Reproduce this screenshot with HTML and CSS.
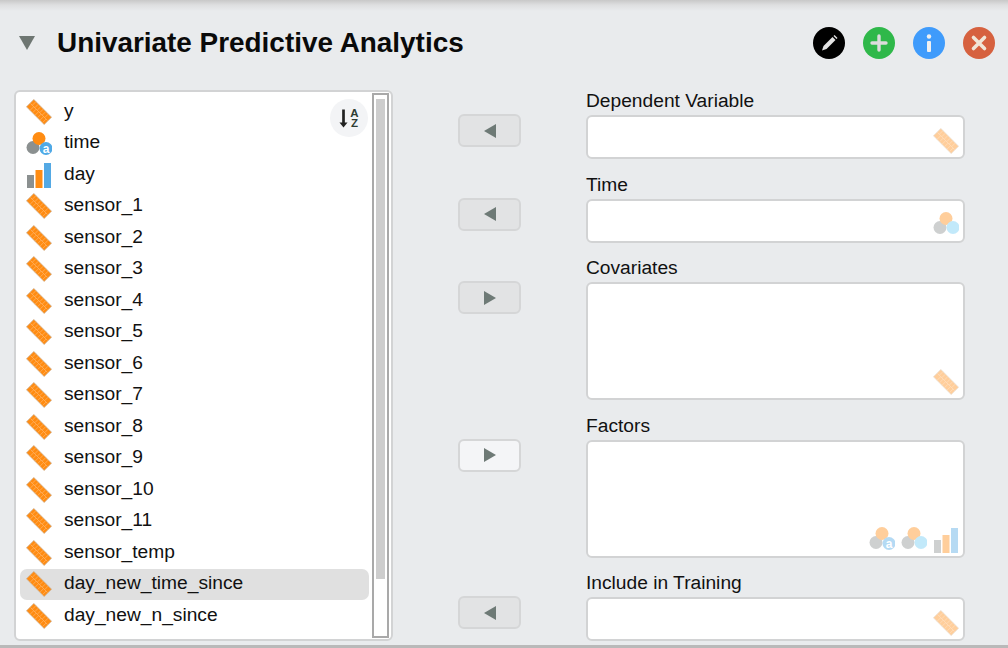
FILE: index.html
```html
<!DOCTYPE html>
<html lang="en">
<head>
<meta charset="utf-8">
<title>Univariate Predictive Analytics</title>
<link rel="stylesheet" href="styles.css">
</head>
<body>
<svg class="defs" width="0" height="0" aria-hidden="true">
  <symbol id="scale" viewBox="0 0 26 26">
    <g transform="rotate(45 13 13)">
      <rect x=".5" y="7.800" width="25" height="10.400" fill="#ff8c12" stroke="#c8ad92" stroke-width=".7"/>
      <path d="M1 13H25M3.500 8V13M7 8V13M10.500 8V13M14 8V13M17.500 8V13M21 8V13M5.500 13V18M9 13V18M12.500 13V18M16 13V18M19.500 13V18M23 13V18" stroke="#ffb468" stroke-width=".7" fill="none"/>
    </g>
  </symbol>
  <symbol id="nominal-base" viewBox="0 0 26 26">
    <circle cx="7" cy="17.500" r="6.500" fill="#8b9090"/>
    <circle cx="13" cy="8.500" r="6.500" fill="#ff8c12"/>
    <circle cx="20" cy="18.500" r="6.500" fill="#4fa9e6"/>
  </symbol>
  <symbol id="nominal" viewBox="0 0 26 26">
    <circle cx="7" cy="17.500" r="6.500" fill="#8b9090"/>
    <circle cx="13" cy="8.500" r="6.500" fill="#ff8c12"/>
    <circle cx="20" cy="17.500" r="6.500" fill="#70ccf5"/>
  </symbol>
  <symbol id="ordinal" viewBox="0 0 26 26">
    <rect x="1" y="13" width="7" height="13" fill="#8b9090"/>
    <rect x="9.500" y="8" width="7" height="18" fill="#ff8c12"/>
    <rect x="18" y="1" width="7" height="25" fill="#54a9e4"/>
  </symbol>
</svg>

<main class="panel">
  <header class="head">
    <span class="caret"></span>
    <h1 class="title">Univariate Predictive Analytics</h1>
    <div class="actions">
      <span class="round black">
        <svg viewBox="0 0 32 32"><path d="M9 23.500l1.500-4.500L19.500 10l3 3L13.500 22z" fill="#e4e4e4"/><path d="M20.500 9l1-1 3 3-1 1z" fill="#e4e4e4"/></svg>
      </span>
      <span class="round green">
        <svg viewBox="0 0 32 32"><path d="M16 9V23M9 16H23" stroke="#dcdcdc" stroke-width="3.400" stroke-linecap="round"/></svg>
      </span>
      <span class="round blue">
        <svg viewBox="0 0 32 32"><circle cx="16" cy="9.500" r="2.200" fill="#f0f0f0"/><rect x="14" y="14" width="4" height="11" rx="1" fill="#f0f0f0"/></svg>
      </span>
      <span class="round red">
        <svg viewBox="0 0 32 32"><path d="M10.500 10.500L21.500 21.500M21.500 10.500L10.500 21.500" stroke="#f0e6d8" stroke-width="3.600" stroke-linecap="round"/></svg>
      </span>
    </div>
  </header>

  <section class="form">
    <div class="source">
      <ul class="vars">
        <li class="var"><svg class="ico"><use href="#scale"/></svg>y</li>
        <li class="var"><svg class="ico"><use href="#nominal-base"/><text x="20" y="22.500" class="glyph-a">a</text></svg>time</li>
        <li class="var"><svg class="ico"><use href="#ordinal"/></svg>day</li>
        <li class="var"><svg class="ico"><use href="#scale"/></svg>sensor_1</li>
        <li class="var"><svg class="ico"><use href="#scale"/></svg>sensor_2</li>
        <li class="var"><svg class="ico"><use href="#scale"/></svg>sensor_3</li>
        <li class="var"><svg class="ico"><use href="#scale"/></svg>sensor_4</li>
        <li class="var"><svg class="ico"><use href="#scale"/></svg>sensor_5</li>
        <li class="var"><svg class="ico"><use href="#scale"/></svg>sensor_6</li>
        <li class="var"><svg class="ico"><use href="#scale"/></svg>sensor_7</li>
        <li class="var"><svg class="ico"><use href="#scale"/></svg>sensor_8</li>
        <li class="var"><svg class="ico"><use href="#scale"/></svg>sensor_9</li>
        <li class="var"><svg class="ico"><use href="#scale"/></svg>sensor_10</li>
        <li class="var"><svg class="ico"><use href="#scale"/></svg>sensor_11</li>
        <li class="var"><svg class="ico"><use href="#scale"/></svg>sensor_temp</li>
        <li class="var selected"><svg class="ico"><use href="#scale"/></svg>day_new_time_since</li>
        <li class="var"><svg class="ico"><use href="#scale"/></svg>day_new_n_since</li>
      </ul>
      <div class="sort">
        <svg class="sort-arrow" viewBox="0 0 10 22"><path d="M5 1V18" stroke="#222" stroke-width="3"/><path d="M0.500 15.500H9.500L5 21z" fill="#222"/></svg>
        <span class="sort-letters">A<br>Z</span>
      </div>
      <div class="scrollbar"><div class="thumb"></div></div>
    </div>

    <div class="targets">
      <div class="target">
        <button class="move"><span class="tri left"></span></button>
        <div class="field">
          <label class="label">Dependent Variable</label>
          <div class="box short"><span class="hints"><svg class="hint"><use href="#scale"/></svg></span></div>
        </div>
      </div>
      <div class="target">
        <button class="move"><span class="tri left"></span></button>
        <div class="field">
          <label class="label">Time</label>
          <div class="box short"><span class="hints"><svg class="hint raised"><use href="#nominal"/></svg></span></div>
        </div>
      </div>
      <div class="target">
        <button class="move"><span class="tri right"></span></button>
        <div class="field">
          <label class="label">Covariates</label>
          <div class="box tall"><span class="hints"><svg class="hint"><use href="#scale"/></svg></span></div>
        </div>
      </div>
      <div class="target">
        <button class="move on"><span class="tri right"></span></button>
        <div class="field">
          <label class="label">Factors</label>
          <div class="box tall"><span class="hints"><svg class="hint raised"><use href="#nominal-base"/><text x="20" y="22.500" class="glyph-a">a</text></svg><svg class="hint raised"><use href="#nominal"/></svg><svg class="hint"><use href="#ordinal"/></svg></span></div>
        </div>
      </div>
      <div class="target">
        <button class="move"><span class="tri left"></span></button>
        <div class="field">
          <label class="label">Include in Training</label>
          <div class="box short"><span class="hints"><svg class="hint"><use href="#scale"/></svg></span></div>
        </div>
      </div>
    </div>
  </section>
</main>
</body>
</html>
```

FILE: styles.css
```css
* { box-sizing: border-box; }
html, body { margin: 0; height: 100%; }
body {
  width: 1008px;
  height: 648px;
  overflow: hidden;
  background: #e9ebed;
  font-family: "Liberation Sans", Arial, sans-serif;
  color: #111;
}
.defs { position: absolute; }
.glyph-a {
  font-family: "Liberation Sans", Arial, sans-serif;
  font-size: 12px;
  font-weight: 700;
  text-anchor: middle;
  fill: #fff;
}

.panel {
  height: 648px;
  background: linear-gradient(#c8c8c8 0, #dedfe0 5px, #e9ebed 11px);
  border-bottom: 3px solid #b9b9b9;
  padding-top: 24px;
}

.head {
  display: flex;
  align-items: center;
  height: 38px;
  padding: 0 13px 0 19px;
}
.caret {
  width: 0;
  height: 0;
  border-left: 8px solid transparent;
  border-right: 8px solid transparent;
  border-top: 14px solid #6e7672;
}
.title {
  margin: 0 0 0 22px;
  font-size: 27.900px;
  font-weight: 700;
  color: #0a0a0a;
}
.actions {
  margin-left: auto;
  display: flex;
  gap: 18px;
}
.round {
  display: block;
  width: 32px;
  height: 32px;
  border-radius: 50%;
}
.round svg { display: block; width: 32px; height: 32px; }
.black { background: #000; }
.green { background: #2fb84a; }
.blue { background: #3f9bfb; }
.red { background: #d6613f; }

.form {
  display: flex;
  margin-top: 28px;
  padding-left: 14px;
}

.source {
  position: relative;
  width: 379px;
  height: 551px;
  background: #fff;
  border: 2px solid #d2d3d4;
  border-radius: 6px;
}
.vars {
  list-style: none;
  margin: 0;
  padding: 4px 0 0 4px;
  width: 353px;
}
.var {
  display: flex;
  align-items: center;
  height: 31.500px;
  padding: 0 0 2px 6px;
  font-size: 19.200px;
  border-radius: 7px;
  color: #111;
}
.var.selected { background: #e0e0e0; }
.ico {
  width: 26px;
  height: 26px;
  margin: 2px 12px 0 0;
  flex: none;
}

.sort {
  position: absolute;
  top: 7px;
  right: 23px;
  width: 38px;
  height: 38px;
  border-radius: 50%;
  background: #f3f4f6;
  display: flex;
  align-items: center;
  justify-content: center;
  gap: 2px;
}
.sort-arrow { width: 9px; height: 21px; }
.sort-letters {
  font-size: 11.500px;
  line-height: 10px;
  font-weight: 700;
  color: #2e3d33;
  text-align: center;
}

.scrollbar {
  position: absolute;
  top: 1px;
  right: 2px;
  bottom: 1px;
  width: 17px;
  background: #fff;
  border: 2px solid #a9a9a9;
  padding: 4px 2px 0;
}
.thumb {
  height: 480px;
  background: #cdcdcd;
}

.targets {
  display: flex;
  flex-direction: column;
  gap: 14.500px;
  margin-left: 65px;
}
.target {
  display: flex;
  align-items: flex-start;
}
.move {
  flex: none;
  width: 63px;
  height: 33px;
  margin-top: 24px;
  margin-right: 65px;
  padding: 0;
  background: #e2e3e4;
  border: 2px solid #d5d6d7;
  border-radius: 6px;
  display: flex;
  align-items: center;
  justify-content: center;
}
.move.on { background: #f4f5f7; }
.tri {
  width: 0;
  height: 0;
  border-top: 7px solid transparent;
  border-bottom: 7px solid transparent;
}
.tri.left { border-right: 12px solid #6e7a76; }
.tri.right { border-left: 12px solid #6e7a76; }

.field { width: 379px; }
.label {
  display: block;
  font-size: 19.200px;
  line-height: 21px;
  margin-bottom: 4px;
  color: #111;
}
.box {
  display: flex;
  align-items: flex-end;
  justify-content: flex-end;
  background: #fff;
  border: 2px solid #d2d3d4;
  border-radius: 6px;
  padding: 0 4px 3px 0;
}
.box.short { height: 44px; }
.box.tall { height: 118px; }
.hints {
  display: flex;
  align-items: flex-end;
  gap: 6px;
  opacity: .42;
}
.hint {
  width: 26px;
  height: 26px;
  display: block;
}
.hint.raised { margin-bottom: 2px; }
```
